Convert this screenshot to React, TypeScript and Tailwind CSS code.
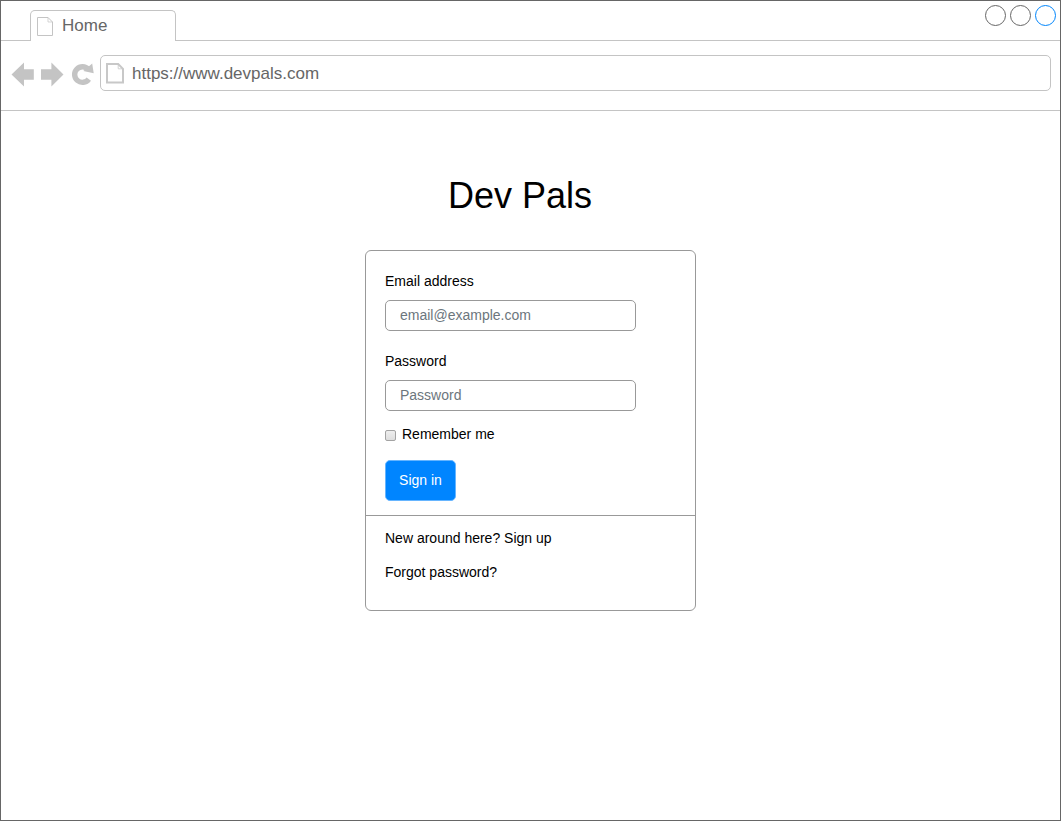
import type { ReactNode } from "react";

function TabPageIcon({ className }: { className: string }) {
  return (
    <svg className={className} viewBox="0 0 16 19" fill="none" stroke="#c4c4c4" strokeWidth={1}>
      <path d="M.5 .5H11L15.5 5V18.5H.5Z" />
      <path d="M11 .5V5H15.5" strokeWidth={0.7} />
    </svg>
  );
}

function AddressPageIcon({ className }: { className: string }) {
  return (
    <svg className={className} viewBox="0 0 18 21" fill="none" stroke="#c8c8c8" strokeWidth={2}>
      <path d="M1 1H12.2L17 5.8V19.6H1Z" />
      <path d="M12.2 1V5.8H17" strokeWidth={0.8} />
    </svg>
  );
}

function WindowCircle({ className }: { className: string }) {
  return <span className={`size-[21px] rounded-full border ${className}`} />;
}

function TabBar() {
  return (
    <div className="flex h-10 shrink-0">
      <div className="w-[29px] border-b border-[#c4c4c4]" />
      <div className="mt-[9px] flex w-[146px] rounded-t-[5px] border border-b-0 border-[#c4c4c4] pl-[6px]">
        <TabPageIcon className="mt-[6px] h-[19px] w-[16px]" />
        <span className="ml-[9px] mt-[5px] text-[17px] leading-[20px] text-[#666]">Home</span>
      </div>
      <div className="flex flex-1 justify-end gap-1 border-b border-[#c4c4c4] pr-[4px] pt-[4px]">
        <WindowCircle className="border-[#666]" />
        <WindowCircle className="border-[#666]" />
        <WindowCircle className="border-[#0085fc]" />
      </div>
    </div>
  );
}

function Toolbar() {
  return (
    <div className="flex h-[70px] shrink-0 border-b border-[#c4c4c4] pl-[10px] pr-[9px] pt-[14px]">
      <svg className="mt-[7px] h-[25px] w-[84px]" viewBox="0 0 84 25" fill="#c4c4c4">
        <path d="M.5 12.5L13 .6V7.2H22.8V17.8H13V24.4Z" />
        <path d="M52.5 12.5L40.4 .6V7.2H30V17.8H40.4V24.4Z" />
        <path d="M77.8 17.1A7.8 7.8 0 1 1 77.3 7.4" fill="none" stroke="#c4c4c4" strokeWidth="5.4" />
        <path d="M81.2 1.6L82.7 11.3L72.3 9Z" />
      </svg>
      <div className="ml-[5px] flex h-9 flex-1 rounded-[5px] border border-[#c4c4c4] pl-[5px]">
        <AddressPageIcon className="mt-[7px] h-[21px] w-[18px]" />
        <span className="ml-[8px] mt-[8px] text-[17px] leading-[20px] text-[#666]">https://www.devpals.com</span>
      </div>
    </div>
  );
}

function Field({ label, type, placeholder }: { label: string; type: string; placeholder: string }) {
  return (
    <label className="block">
      <span className="block h-[29px] leading-[20px]">{label}</span>
      <input
        type={type}
        placeholder={placeholder}
        className="block h-[31px] w-[251px] rounded-[5px] border border-[#999] px-[14px] pb-[2px] text-[14px] placeholder:text-[#6c767d]"
      />
    </label>
  );
}

function FooterLink({ children }: { children: ReactNode }) {
  return <a className="block leading-[20px]">{children}</a>;
}

export default function App() {
  return (
    <div className="flex h-[821px] w-[1061px] flex-col overflow-hidden border border-[#666] bg-white font-['Liberation_Sans',Arial,sans-serif] text-black">
      <TabBar />
      <Toolbar />
      <main className="flex flex-1 flex-col">
        <h1 className="ml-[447px] mt-[63px] h-[76px] text-[36px] leading-[44px]">Dev Pals</h1>
        <div className="ml-[364px] h-[361px] w-[331px] rounded-[6px] border border-[#999] text-[14px]">
          <form className="flex h-[265px] flex-col border-b border-[#999] pl-[19px] pt-[20px]">
            <Field label="Email address" type="email" placeholder="email@example.com" />
            <div className="h-[20px]" />
            <Field label="Password" type="password" placeholder="Password" />
            <label className="mt-[13px] flex h-[20px]">
              <span className="mt-[6px] flex size-[11px]">
                <input
                  type="checkbox"
                  className="size-[11px] appearance-none rounded-[2px] border border-[#a3a3a3] bg-linear-to-b from-[#eee] to-[#dedede]"
                />
              </span>
              <span className="ml-[6px] leading-[20px]">Remember me</span>
            </label>
            <button
              type="button"
              className="mt-[16px] h-[41px] w-[71px] rounded-[5px] border border-[#66b5ff] bg-[#0085ff] text-[14px] text-white"
            >
              Sign in
            </button>
          </form>
          <div className="flex flex-col gap-[14px] pl-[19px] pt-[12px]">
            <FooterLink>New around here? Sign up</FooterLink>
            <FooterLink>Forgot password?</FooterLink>
          </div>
        </div>
      </main>
    </div>
  );
}
